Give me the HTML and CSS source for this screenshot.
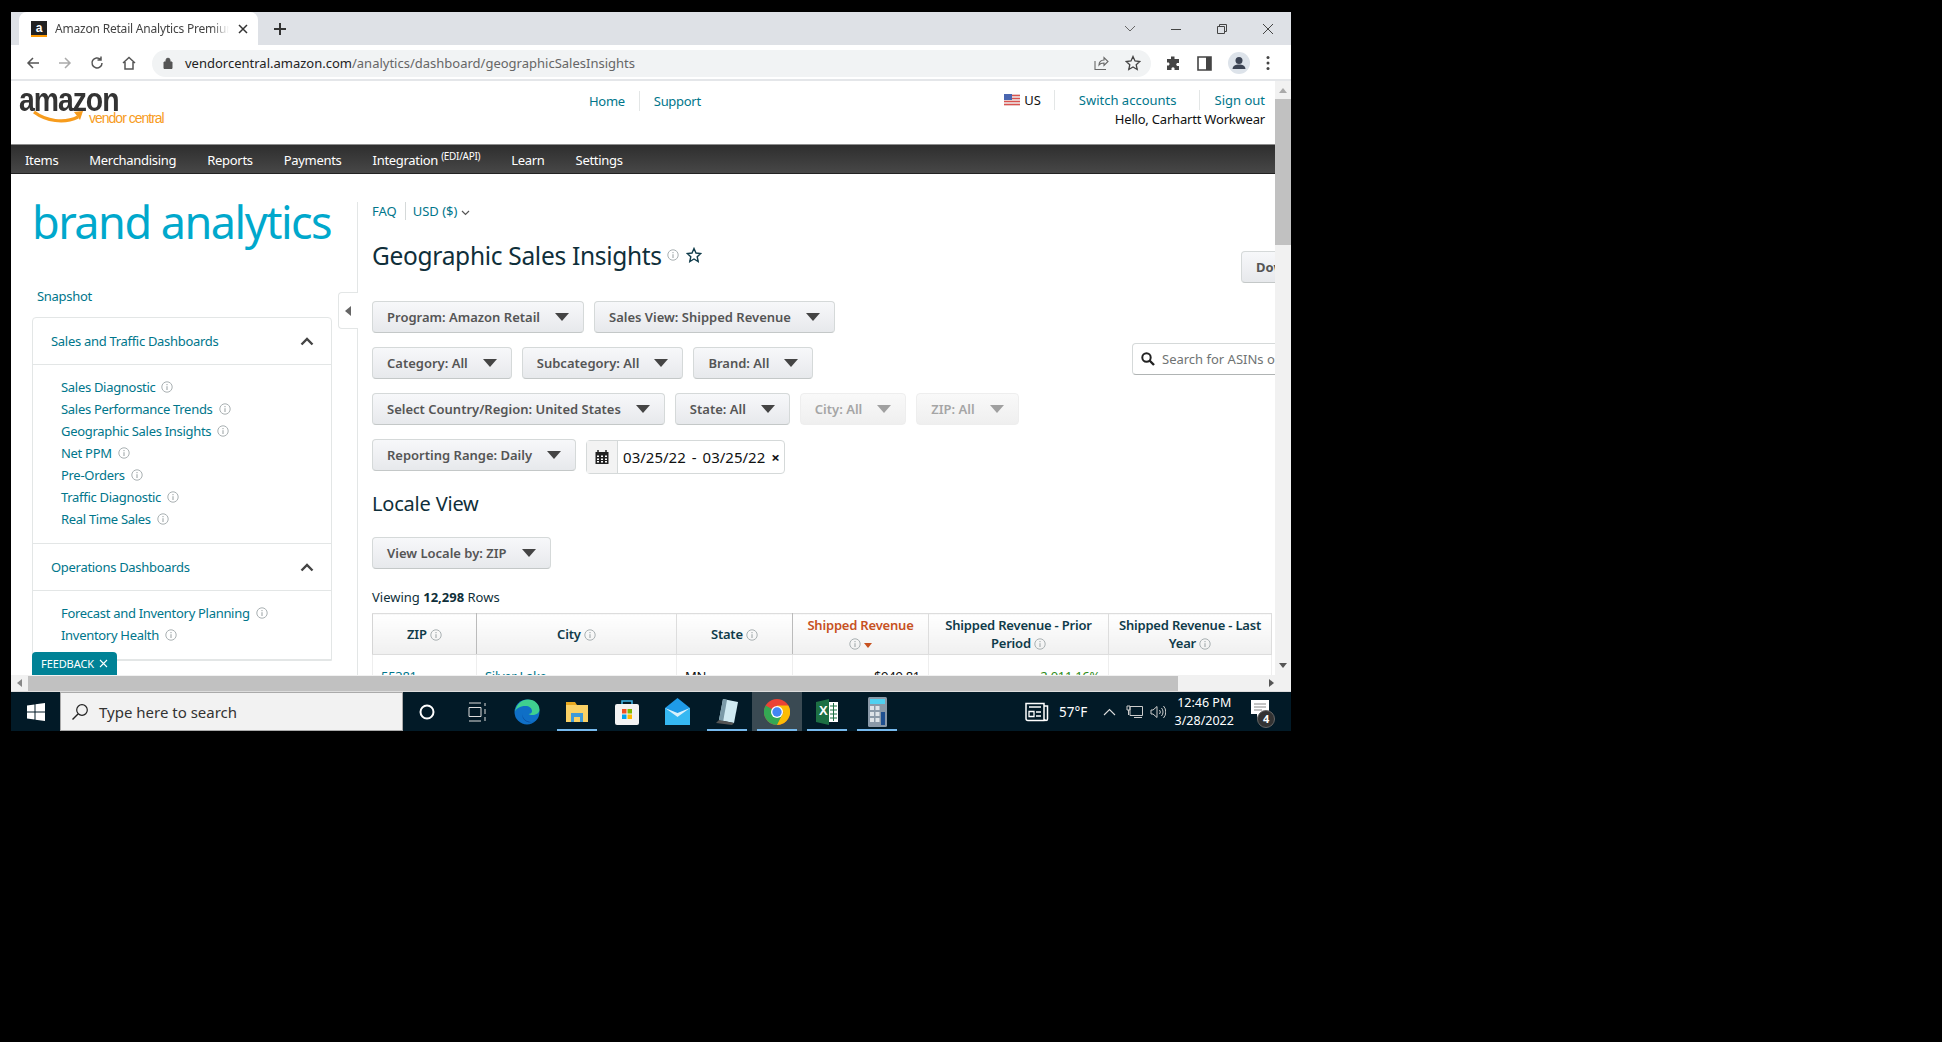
FILE: index.html
```html
<!DOCTYPE html>
<html lang="en">
<head>
    <meta charset="UTF-8">
    <meta name="viewport" content="width=device-width, initial-scale=1.0">
    <title>Geographic Sales Insights</title>
    <link rel="stylesheet" href="styles.css">
</head>
<body>

<svg class="defs" width="0" height="0">
    <symbol id="info" viewBox="0 0 12 12">
        <circle cx="6" cy="6" r="5.2" fill="none" stroke="#a9b0b2" stroke-width="1"/>
        <rect x="5.4" y="5.2" width="1.2" height="3.8" fill="#a9b0b2"/>
        <rect x="5.4" y="3" width="1.2" height="1.2" fill="#a9b0b2"/>
    </symbol>
    <symbol id="caret" viewBox="0 0 14 8">
        <path d="M0 0h14L7 8z"/>
    </symbol>
    <symbol id="chev-up" viewBox="0 0 14 9">
        <path d="M1.5 7.5L7 2l5.500 5.500" fill="none" stroke="#444" stroke-width="2.400"/>
    </symbol>
</svg>

<div class="window">
    <!-- browser chrome -->
    <div class="tabbar">
        <div class="tab">
            <span class="favicon">a</span>
            <span class="tab-title">Amazon Retail Analytics Premium</span>
            <svg class="tab-x" width="10" height="10" viewBox="0 0 10 10"><path d="M1 1l8 8M9 1l-8 8" stroke="#333" stroke-width="1.500"/></svg>
        </div>
        <svg class="new-tab" width="14" height="14" viewBox="0 0 14 14"><path d="M7 1v12M1 7h12" stroke="#333" stroke-width="2"/></svg>
        <div class="win-controls">
            <svg width="12" height="8" viewBox="0 0 12 8"><path d="M1 1l5 5 5-5" fill="none" stroke="#666" stroke-width="1"/></svg>
            <svg width="12" height="12" viewBox="0 0 12 12"><path d="M1 6.500h10" stroke="#444" stroke-width="1"/></svg>
            <svg width="12" height="12" viewBox="0 0 12 12"><path d="M1.500 3.500h7v7h-7zM3.500 3.500v-2h7v7h-2" fill="none" stroke="#444" stroke-width="1"/></svg>
            <svg width="12" height="12" viewBox="0 0 12 12"><path d="M1 1l10 10M11 1L1 11" stroke="#444" stroke-width="1"/></svg>
        </div>
    </div>
    <div class="toolbar">
        <div class="nav-btns">
            <svg width="14" height="14" viewBox="0 0 14 14"><path d="M13 7H2M7 2L2 7l5 5" fill="none" stroke="#555" stroke-width="1.500"/></svg>
            <svg width="14" height="14" viewBox="0 0 14 14"><path d="M1 7h11M7 2l5 5-5 5" fill="none" stroke="#aaa" stroke-width="1.500"/></svg>
            <svg width="14" height="14" viewBox="0 0 14 14"><path d="M12 7a5 5 0 1 1-1.500-3.600M11 0.500v3.500H7.500" fill="none" stroke="#555" stroke-width="1.500"/></svg>
            <svg width="14" height="14" viewBox="0 0 14 14"><path d="M1 7l6-5.500L13 7M3 6v7h8V6" fill="none" stroke="#555" stroke-width="1.500"/></svg>
        </div>
        <div class="omnibox">
            <svg class="lock" width="10" height="12" viewBox="0 0 10 12"><path d="M1 5h8v6.500H1zM3 5V3.200a2 2 0 0 1 4 0V5" fill="#555" stroke="#555"/></svg>
            <span class="url">vendorcentral.amazon.com<span class="url-path">/analytics/dashboard/geographicSalesInsights</span></span>
            <svg class="omni-share" width="16" height="16" viewBox="0 0 16 16"><path d="M2 6v8.500h11M6 10c0-3 2-5 5-5V2.500l4 4-4 4V8c-2 0-4 .5-5 2z" fill="none" stroke="#666" stroke-width="1.100"/></svg>
            <svg class="omni-star" width="16" height="16" viewBox="0 0 16 16"><path d="M8 1.500l2 4.500 4.800.5-3.600 3.200 1 4.800L8 12l-4.200 2.500 1-4.800L1.200 6.500 6 6z" fill="none" stroke="#444" stroke-width="1.300"/></svg>
        </div>
        <div class="tool-icons">
            <svg width="16" height="16" viewBox="0 0 16 16"><path d="M6 1.500h3.500V4H14v4h-2a2 2 0 0 0 0 3h2v4H9.500v-2a2 2 0 0 0-3 0v2H2v-4.500h1.800a2 2 0 0 0 0-3H2V4h4z" fill="#444"/></svg>
            <svg width="15" height="15" viewBox="0 0 15 15"><path d="M1 1h13v13H1z" fill="none" stroke="#444" stroke-width="1.600"/><path d="M9 1h5v13H9z" fill="#444"/></svg>
            <span class="avatar">
                <svg width="22" height="22" viewBox="0 0 22 22"><circle cx="11" cy="8.500" r="3.500" fill="#3c4454"/><path d="M4.500 17c.5-3.500 3-4.500 6.500-4.500s6 1 6.500 4.500z" fill="#3c4454"/></svg>
            </span>
            <svg width="4" height="16" viewBox="0 0 4 16"><circle cx="2" cy="2.500" r="1.500" fill="#444"/><circle cx="2" cy="8" r="1.500" fill="#444"/><circle cx="2" cy="13.500" r="1.500" fill="#444"/></svg>
        </div>
    </div>

    <!-- page -->
    <div class="viewport">
        <div class="page">
            <header class="site-header">
                <div class="logo">
                    <span class="logo-word">amazon</span>
                    <span class="logo-sub">vendor central</span>
                    <svg class="logo-smile" width="52" height="17" viewBox="0 0 52 17"><path d="M1 3c12 9 30 12 44 5" fill="none" stroke="#f79c1d" stroke-width="3.200"/><path d="M41 3l9-1-3 9z" fill="#f79c1d"/></svg>
                </div>
                <div class="top-links">
                    <a class="link">Home</a>
                    <a class="link">Support</a>
                </div>
                <div class="account">
                    <div class="account-row">
                        <span class="locale">
                            <svg width="16" height="12" viewBox="0 0 16 12"><rect width="16" height="12" fill="#eee"/><path d="M0 1.500h16M0 4.500h16M0 7.500h16M0 10.500h16" stroke="#d9534f" stroke-width="1.300"/><rect width="8" height="6" fill="#4a66b0"/></svg>
                            US
                        </span>
                        <a class="link acct-link">Switch accounts</a>
                        <a class="link acct-link">Sign out</a>
                    </div>
                    <div class="hello">Hello, Carhartt Workwear</div>
                </div>
            </header>
            <nav class="main-nav">
                <a>Items</a>
                <a>Merchandising</a>
                <a>Reports</a>
                <a>Payments</a>
                <a>Integration <sup>(EDI/API)</sup></a>
                <a>Learn</a>
                <a>Settings</a>
            </nav>

            <div class="content">
                <aside class="sidebar">
                    <div class="brand">brand analytics</div>
                    <a class="link snapshot">Snapshot</a>
                    <div class="side-box">
                        <div class="side-head"><span>Sales and Traffic Dashboards</span><svg width="14" height="9"><use href="#chev-up"/></svg></div>
                        <ul class="side-list">
                            <li>Sales Diagnostic <svg class="i"><use href="#info"/></svg></li>
                            <li>Sales Performance Trends <svg class="i"><use href="#info"/></svg></li>
                            <li>Geographic Sales Insights <svg class="i"><use href="#info"/></svg></li>
                            <li>Net PPM <svg class="i"><use href="#info"/></svg></li>
                            <li>Pre-Orders <svg class="i"><use href="#info"/></svg></li>
                            <li>Traffic Diagnostic <svg class="i"><use href="#info"/></svg></li>
                            <li>Real Time Sales <svg class="i"><use href="#info"/></svg></li>
                        </ul>
                        <div class="side-head"><span>Operations Dashboards</span><svg width="14" height="9"><use href="#chev-up"/></svg></div>
                        <ul class="side-list">
                            <li>Forecast and Inventory Planning <svg class="i"><use href="#info"/></svg></li>
                            <li>Inventory Health <svg class="i"><use href="#info"/></svg></li>
                        </ul>
                    </div>
                </aside>
                <div class="gutter">
                    <div class="collapse-tab"><svg width="6" height="10" viewBox="0 0 6 10"><path d="M6 0v10L0 5z" fill="#666"/></svg></div>
                </div>
                <main class="main">
                    <div class="sub-links">
                        <a class="link">FAQ</a>
                        <a class="link usd">USD ($) <svg width="9" height="6" viewBox="0 0 9 6"><path d="M1 1l3.500 3.500L8 1" fill="none" stroke="#555" stroke-width="1.200"/></svg></a>
                    </div>
                    <div class="title-row">
                        <h1>Geographic Sales Insights</h1>
                        <svg class="i title-i"><use href="#info"/></svg>
                        <svg class="title-star" width="16" height="16" viewBox="0 0 16 16"><path d="M8 1.500l2 4.500 4.800.5-3.600 3.200 1 4.800L8 12l-4.200 2.500 1-4.800L1.200 6.500 6 6z" fill="none" stroke="#0f3b4a" stroke-width="1.400"/></svg>
                        <button class="btn download">Download</button>
                    </div>
                    <div class="filters">
                        <div class="filter-row">
                            <button class="btn">Program: Amazon Retail <svg class="caret"><use href="#caret"/></svg></button>
                            <button class="btn">Sales View: Shipped Revenue <svg class="caret"><use href="#caret"/></svg></button>
                        </div>
                        <div class="filter-row">
                            <button class="btn">Category: All <svg class="caret"><use href="#caret"/></svg></button>
                            <button class="btn">Subcategory: All <svg class="caret"><use href="#caret"/></svg></button>
                            <button class="btn">Brand: All <svg class="caret"><use href="#caret"/></svg></button>
                            <div class="search">
                                <svg width="14" height="14" viewBox="0 0 14 14"><circle cx="5.500" cy="5.500" r="4.200" fill="none" stroke="#222" stroke-width="2"/><path d="M8.500 8.500l4.500 4.500" stroke="#222" stroke-width="2.400"/></svg>
                                <span>Search for ASINs or Keywords</span>
                            </div>
                        </div>
                        <div class="filter-row">
                            <button class="btn">Select Country/Region: United States <svg class="caret"><use href="#caret"/></svg></button>
                            <button class="btn">State: All <svg class="caret"><use href="#caret"/></svg></button>
                            <button class="btn disabled">City: All <svg class="caret"><use href="#caret"/></svg></button>
                            <button class="btn disabled">ZIP: All <svg class="caret"><use href="#caret"/></svg></button>
                        </div>
                        <div class="filter-row">
                            <button class="btn">Reporting Range: Daily <svg class="caret"><use href="#caret"/></svg></button>
                            <div class="date-range">
                                <span class="cal">
                                    <svg width="14" height="14" viewBox="0 0 14 14"><path d="M0.500 2h13v12H.5z" fill="#222"/><path d="M3 0v3M11 0v3" stroke="#222" stroke-width="1.500"/><path d="M2 5.500h2v1.500H2zM6 5.500h2v1.500H6zM10 5.500h2v1.500h-2zM2 8.500h2V10H2zM6 8.500h2V10H6zM10 8.500h2V10h-2zM2 11h2v1.500H2zM6 11h2v1.500H6zM10 11h2v1.500h-2z" fill="#fff"/></svg>
                                </span>
                                <span class="date">03/25/22</span>
                                <span class="dash">-</span>
                                <span class="date">03/25/22</span>
                                <span class="clear">×</span>
                            </div>
                        </div>
                    </div>
                    <h2>Locale View</h2>
                    <button class="btn locale-btn">View Locale by: ZIP <svg class="caret"><use href="#caret"/></svg></button>
                    <p class="viewing">Viewing <b>12,298</b> Rows</p>
                    <table class="grid">
                        <colgroup>
                            <col class="c-zip"><col class="c-city"><col class="c-state"><col class="c-rev"><col class="c-prior"><col class="c-last">
                        </colgroup>
                        <thead>
                            <tr>
                                <th class="fixed-edge">ZIP <svg class="i"><use href="#info"/></svg></th>
                                <th>City <svg class="i"><use href="#info"/></svg></th>
                                <th class="fixed-edge">State <svg class="i"><use href="#info"/></svg></th>
                                <th class="sorted">Shipped Revenue<br><svg class="i"><use href="#info"/></svg> <svg class="sort-caret" width="8" height="5" viewBox="0 0 8 5"><path d="M0 0h8L4 5z" fill="#c7511f"/></svg></th>
                                <th>Shipped Revenue - Prior Period <svg class="i"><use href="#info"/></svg></th>
                                <th>Shipped Revenue - Last Year <svg class="i"><use href="#info"/></svg></th>
                            </tr>
                        </thead>
                        <tbody>
                            <tr>
                                <td><a class="link">55381</a></td>
                                <td><a class="link">Silver Lake</a></td>
                                <td>MN</td>
                                <td class="num">$949.81</td>
                                <td class="num up">2,011.16%</td>
                                <td class="num"></td>
                            </tr>
                        </tbody>
                    </table>
                </main>
            </div>
            <div class="feedback">FEEDBACK <svg width="9" height="9" viewBox="0 0 9 9"><path d="M1 1l7 7M8 1L1 8" stroke="#fff" stroke-width="1.100"/></svg></div>
        </div>
        <div class="v-scroll">
            <svg width="8" height="5" viewBox="0 0 8 5"><path d="M0 5h8L4 0z" fill="#aaa"/></svg>
            <div class="v-thumb"></div>
            <svg class="v-down" width="8" height="5" viewBox="0 0 8 5"><path d="M0 0h8L4 5z" fill="#555"/></svg>
        </div>
    </div>
    <div class="h-scroll">
        <svg width="5" height="8" viewBox="0 0 5 8"><path d="M5 0v8L0 4z" fill="#888"/></svg>
        <div class="h-thumb"></div>
        <svg class="h-right" width="5" height="8" viewBox="0 0 5 8"><path d="M0 0v8l5-4z" fill="#555"/></svg>
    </div>

    <!-- windows taskbar -->
    <div class="taskbar">
        <div class="start">
            <svg width="18" height="18" viewBox="0 0 18 18"><path d="M0 2.500l7.500-1v7H0zM8.500 1.300L18 0v8.500H8.500zM0 9.500h7.500v7l-7.500-1zM8.500 9.500H18V18l-9.500-1.300z" fill="#fff"/></svg>
        </div>
        <div class="task-search">
            <svg width="18" height="18" viewBox="0 0 18 18"><circle cx="11" cy="7" r="5.300" fill="none" stroke="#222" stroke-width="1.200"/><path d="M7 11l-5.500 5.500" stroke="#222" stroke-width="1.400"/></svg>
            <span>Type here to search</span>
        </div>
        <div class="task-icons">
            <span class="task-item"><svg width="16" height="16" viewBox="0 0 16 16"><circle cx="8" cy="8" r="6.500" fill="none" stroke="#fff" stroke-width="2"/></svg></span>
            <span class="task-item"><svg width="18" height="20" viewBox="0 0 18 20"><path d="M1 1h12M1 19h12M1 5.500h12v9H1zM17 1v3M17 7v5M17 15v4" fill="none" stroke="#ddd" stroke-width="1"/></svg></span>
            <span class="task-item">
                <svg width="26" height="26" viewBox="0 0 26 26"><circle cx="13" cy="13" r="12.500" fill="#0f6fc6"/><path d="M1 13C2 5 8 .5 14 .5c7 0 11.500 5 11.500 10 0 4-4 5.500-7 5.500-2 0-3.500-.5-4-1 2 0 3.500-1 3.500-3 0-3-3-5-6.500-5C6 7 2 9.500 1 13z" fill="#3fd08f"/><path d="M8 14c0 5 4 9 9 9 1.500 0 3-.5 4-1-5 3-13 1-13-8z" fill="#0a3f8f"/></svg>
            </span>
            <span class="task-item open">
                <svg width="24" height="22" viewBox="0 0 24 22"><path d="M1 1h9l2 3H1z" fill="#e8a820"/><path d="M1 4h22v17H1z" fill="#fad165"/><path d="M6 12h12v9H6z" fill="#3f9ad8"/><path d="M9 16h6v5H9z" fill="#fad165"/></svg>
            </span>
            <span class="task-item">
                <svg width="24" height="26" viewBox="0 0 24 26"><path d="M7 7V2h10v5" fill="none" stroke="#3fb5e8" stroke-width="1.500"/><rect y="5" width="24" height="21" rx="2" fill="#f3f3f3"/><rect x="7" y="10" width="4.500" height="4.500" fill="#f25022"/><rect x="12.500" y="10" width="4.500" height="4.500" fill="#7fba00"/><rect x="7" y="15.500" width="4.500" height="4.500" fill="#00a4ef"/><rect x="12.500" y="15.500" width="4.500" height="4.500" fill="#ffb900"/></svg>
            </span>
            <span class="task-item">
                <svg width="25" height="27" viewBox="0 0 25 27"><path d="M0 10L12.500 0 25 10v17H0z" fill="#1f9be8"/><path d="M0 10l12.500 9L25 10v17H0z" fill="#35b8f2"/><path d="M0 10l12.500 9L25 10l-12.500 5z" fill="#d9f2fc"/></svg>
            </span>
            <span class="task-item open">
                <svg width="24" height="28" viewBox="0 0 24 28"><path d="M8 1l15 3-4 21-15-3z" fill="#cfeaf2"/><path d="M4 22l4-21 4 1-4 22z" fill="#7a9aa8"/><path d="M1 25l3-3 15 3-2 2z" fill="#555"/></svg>
            </span>
            <span class="task-item open active">
                <svg width="26" height="26" viewBox="0 0 26 26"><circle cx="13" cy="13" r="13" fill="#ea4335"/><path d="M13 13L1.700 6.500A13 13 0 0 0 13 26l6.500-11.300z" fill="#34a853"/><path d="M13 13l6.500 0L13 26a13 13 0 0 0 11.300-19.500H13z" fill="#fbbc05"/><circle cx="13" cy="13" r="6" fill="#fff"/><circle cx="13" cy="13" r="4.700" fill="#4285f4"/></svg>
            </span>
            <span class="task-item open">
                <svg width="22" height="26" viewBox="0 0 22 26"><path d="M0 3l13-3v26L0 23z" fill="#1d7044"/><path d="M13 3h9v20h-9z" fill="#fff"/><path d="M14 7h7M14 11h7M14 15h7M14 19h7M17.500 4v18" stroke="#1d7044" stroke-width="1"/></svg>
                <span class="xl">X</span>
            </span>
            <span class="task-item open">
                <svg width="19" height="30" viewBox="0 0 19 30"><rect width="19" height="30" rx="1.500" fill="#8a99a8"/><rect x="2" y="2" width="15" height="5" fill="#4fd0f0"/><path d="M2 9h4v4H2zM7.500 9h4v4h-4zM2 15h4v4H2zM7.500 15h4v4h-4zM2 21h4v4H2zM7.500 21h4v4h-4z" fill="#dde3e8"/><rect x="13" y="15" width="4" height="13" fill="#1f4f8f"/></svg>
            </span>
        </div>
        <div class="tray">
            <svg class="tray-news" width="24" height="20" viewBox="0 0 24 20"><path d="M1 1.500h18v17H3a2 2 0 0 1-2-2zM19 4h3.500v13a1.500 1.500 0 0 1-3 0" fill="none" stroke="#fff" stroke-width="1.500"/><path d="M4 5h12M4 9.500h5v5H4zM11 10h5M11 14h5" fill="none" stroke="#fff" stroke-width="1.300"/></svg>
            <span class="temp">57°F</span>
            <svg class="tray-up" width="13" height="8" viewBox="0 0 13 8"><path d="M1 7l5.500-5.500L12 7" fill="none" stroke="#ddd" stroke-width="1.100"/></svg>
            <svg class="tray-net" width="17" height="14" viewBox="0 0 17 14"><path d="M4 1.500h12.500v9H4zM8 12.500h8M1 1h3v4H1zM2.500 5v5" fill="none" stroke="#ccc" stroke-width="1"/></svg>
            <svg class="tray-vol" width="16" height="14" viewBox="0 0 16 14"><path d="M1 5v4h2l4 3.500v-11L3 5zM9.500 5a3 3 0 0 1 0 4M11.500 3a6 6 0 0 1 0 8M13.500 1a9 9 0 0 1 0 12" fill="none" stroke="#ccc" stroke-width="1"/></svg>
            <div class="clock"><span>12:46 PM</span><span>3/28/2022</span></div>
            <div class="notify">
                <svg width="20" height="20" viewBox="0 0 20 20"><path d="M1 1h18v14h-8l-4 4v-4H1z" fill="#fff"/><path d="M4 5h12M4 8h12M4 11h8" stroke="#888" stroke-width="1"/></svg>
                <span class="badge">4</span>
            </div>
        </div>
    </div>
</div>

</body>
</html>
```

FILE: styles.css
```css
* {
    box-sizing: border-box;
}

body {
    margin: 0;
    background-color: #000;
    font-family: 'Noto Sans', sans-serif;
    font-size: 13px;
    letter-spacing: -0.3px;
    color: #0f1111;
    height: 1042px;
    overflow: hidden;
}

.defs {
    position: absolute;
}

.link {
    color: #00768b;
}

.window {
    width: 1280px;
    height: 719px;
    margin: 12px 0 0 11px;
    display: flex;
    flex-direction: column;
    background-color: #fff;
    overflow: hidden;
}

/* browser chrome */
.tabbar {
    height: 33px;
    background-color: #dee1e6;
    display: flex;
    align-items: flex-end;
    padding-left: 8px;
    flex: none;
}

.tab {
    width: 239px;
    height: 33px;
    background-color: #fff;
    border-radius: 8px 8px 0 0;
    display: flex;
    align-items: center;
    padding: 0 12px;
}

.favicon {
    width: 16px;
    height: 16px;
    background-color: #222;
    color: #fff;
    font: bold 12px/14px 'Liberation Sans', sans-serif;
    text-align: center;
    flex: none;
    border-bottom: 2px solid #f90;
}

.tab-title {
    font-size: 12px;
    color: #444;
    margin-left: 8px;
    width: 174px;
    white-space: nowrap;
    overflow: hidden;
    flex: none;
    letter-spacing: -0.2px;
    -webkit-mask-image: linear-gradient(to right, #000 90%, transparent);
    mask-image: linear-gradient(to right, #000 90%, transparent);
}

.tab-x {
    margin-left: 9px;
    flex: none;
}

.new-tab {
    margin: 0 0 9px 15px;
}

.win-controls {
    margin-left: auto;
    display: flex;
    align-items: center;
    gap: 34px;
    height: 33px;
    padding-right: 17px;
}

.toolbar {
    height: 36px;
    display: flex;
    align-items: center;
    border-bottom: 2px solid #e4e6e9;
    flex: none;
    padding: 2px 0 0 15px;
    letter-spacing: 0;
}

.nav-btns {
    display: flex;
    gap: 18px;
    width: 126px;
    flex: none;
}

.omnibox {
    width: 999px;
    height: 27px;
    border-radius: 14px;
    background-color: #f1f3f4;
    display: flex;
    align-items: center;
    padding-left: 11px;
    flex: none;
}

.url {
    margin-left: 12px;
    font-size: 13px;
    color: #222;
}

.url-path {
    color: #666;
}

.omni-share {
    margin-left: auto;
}

.omni-star {
    margin: 0 10px 0 16px;
}

.tool-icons {
    display: flex;
    align-items: center;
    gap: 16px;
    margin-left: 14px;
}

.avatar {
    width: 22px;
    height: 22px;
    border-radius: 50%;
    background-color: #dde3ea;
    display: block;
}

.avatar svg {
    display: block;
}

/* page */
.viewport {
    height: 594px;
    display: flex;
    flex: none;
}

.page {
    width: 1264px;
    height: 594px;
    position: relative;
    overflow: hidden;
    flex: none;
}

.site-header {
    height: 63px;
    position: relative;
    display: flex;
}

.logo {
    position: relative;
    width: 200px;
    flex: none;
}

.logo-word {
    position: absolute;
    left: 8px;
    top: 0;
    font: bold 33px/38px 'Liberation Sans', sans-serif;
    letter-spacing: -1.200px;
    color: #333;
    transform: scaleX(0.86);
    transform-origin: left;
}

.logo-sub {
    position: absolute;
    left: 78px;
    top: 27px;
    font: 14px/20px 'Liberation Sans', sans-serif;
    letter-spacing: -1px;
    color: #f79c1d;
}

.logo-smile {
    position: absolute;
    left: 22px;
    top: 28px;
}

.top-links {
    display: flex;
    align-items: center;
    height: 20px;
    margin: 10px 0 0 378px;
    flex: none;
}

.top-links a:first-child {
    padding-right: 14px;
    border-right: 1px solid #e3e6e6;
    line-height: 20px;
}

.top-links a:last-child {
    padding-left: 14px;
}

.account {
    position: absolute;
    right: 10px;
    top: 9px;
    text-align: right;
    letter-spacing: 0;
}

.account-row {
    display: flex;
    align-items: center;
    justify-content: flex-end;
    height: 20px;
}

.locale {
    display: flex;
    align-items: center;
    gap: 4px;
    padding-right: 13px;
}

.acct-link {
    padding-left: 24px;
    padding-right: 22px;
    border-left: 1px solid #e3e6e6;
    line-height: 20px;
}

.acct-link:last-child {
    padding-left: 15px;
    padding-right: 0;
}

.hello {
    line-height: 18px;
    letter-spacing: -0.2px;
}

.main-nav {
    height: 30px;
    display: flex;
    align-items: center;
    padding: 1px 0 0 14px;
    background: linear-gradient(#2e2e2e, #474747);
    border-top: 1px solid #8d8d8d;
    border-bottom: 1px solid #222;
}

.main-nav a {
    color: #fff;
    padding: 0 15px 0 0;
    margin-right: 16px;
    white-space: nowrap;
}

.main-nav sup {
    font-size: 10px;
    line-height: 0;
}

.content {
    display: flex;
    height: 501px;
}

.sidebar {
    width: 322px;
    padding: 18px 0 0 21px;
    flex: none;
}

.brand {
    font-size: 45px;
    line-height: 60px;
    color: #00a8cc;
    letter-spacing: -1.500px;
    white-space: nowrap;
}

.snapshot {
    display: block;
    margin: 34px 0 0 5px;
    line-height: 20px;
}

.side-box {
    width: 300px;
    margin-top: 11px;
    border: 1px solid #e3e6e6;
    border-radius: 4px 4px 0 0;
}

.side-head {
    height: 47px;
    display: flex;
    align-items: center;
    justify-content: space-between;
    padding: 0 17px 0 18px;
    color: #00768b;
    border-bottom: 1px solid #e3e6e6;
}

.side-list {
    list-style: none;
    margin: 0;
    padding: 11px 0 13px 28px;
    color: #00768b;
    border-bottom: 1px solid #e3e6e6;
}

.side-list li {
    height: 22px;
    line-height: 22px;
    display: flex;
    align-items: center;
    gap: 6px;
}

.i {
    width: 12px;
    height: 12px;
    flex: none;
}

.gutter {
    width: 30px;
    flex: none;
    border-right: 1px solid #e3e6e6;
    margin-top: 28px;
    margin-left: -5px;
}

.collapse-tab {
    width: 20px;
    height: 37px;
    margin: 90px 0 0 10px;
    background-color: #fff;
    border: 1px solid #e3e6e6;
    border-right: none;
    border-radius: 4px 0 0 4px;
    display: flex;
    align-items: center;
    padding-left: 6px;
}

.main {
    width: 960px;
    padding-left: 14px;
    flex: none;
}

.sub-links {
    display: flex;
    align-items: center;
    margin-top: 28px;
    height: 18px;
    letter-spacing: 0;
}

.sub-links a:first-child {
    padding-right: 8px;
    border-right: 1px solid #d5d9d9;
    line-height: 18px;
}

.usd {
    padding-left: 7px;
}

.title-row {
    display: flex;
    align-items: center;
    height: 32px;
    margin-top: 19px;
}

h1 {
    font-size: 24.500px;
    font-weight: 400;
    margin: 0;
    color: #0f2f3a;
    white-space: nowrap;
}

.title-i {
    margin-left: 5px;
}

.title-star {
    margin-left: 7px;
}

.btn {
    height: 32px;
    padding: 0 14px;
    display: inline-flex;
    align-items: center;
    gap: 15px;
    font-family: inherit;
    font-size: 13px;
    font-weight: 600;
    letter-spacing: 0;
    color: #555;
    background: linear-gradient(#f7f8fa, #e7e9ec);
    border: 1px solid #d5d9d9;
    border-bottom-color: #c4c8c8;
    border-radius: 4px;
    white-space: nowrap;
}

.download {
    margin-left: auto;
    margin-top: 23px;
    width: 77px;
    justify-content: flex-start;
    font-weight: 700;
}

.caret {
    width: 14px;
    height: 8px;
    fill: #444;
    flex: none;
}

.btn.disabled {
    color: #a5a5a5;
    background: linear-gradient(#f9f9f9, #efefef);
    border-color: #eee;
}

.btn.disabled .caret {
    fill: #a0a0a0;
}

.filters {
    display: flex;
    flex-direction: column;
    gap: 14px;
    margin-top: 30px;
}

.filter-row {
    display: flex;
    align-items: flex-start;
    gap: 10px;
    height: 32px;
}

.search {
    width: 186px;
    height: 32px;
    margin: -4px 0 0 auto;
    border: 1px solid #d5d9d9;
    border-bottom-color: #b0b4b4;
    border-radius: 4px;
    display: flex;
    align-items: center;
    gap: 7px;
    padding-left: 8px;
    color: #6f7373;
    letter-spacing: 0;
    white-space: nowrap;
    overflow: hidden;
}

.search svg {
    flex: none;
}

.date-range {
    height: 34px;
    margin-top: 1px;
    display: flex;
    align-items: center;
    border: 1px solid #d5d9d9;
    border-radius: 4px;
    font-size: 15px;
    letter-spacing: 0;
}

.cal {
    width: 31px;
    height: 32px;
    background-color: #f3f3f3;
    border-right: 1px solid #d5d9d9;
    display: flex;
    align-items: center;
    justify-content: center;
}

.date {
    margin-left: 5px;
}

.dash {
    margin-left: 6px;
    margin-right: 1px;
}

.clear {
    margin: 0 4px 0 6px;
    font-weight: 700;
}

h2 {
    font-size: 20px;
    font-weight: 400;
    line-height: 28px;
    margin: 19px 0 0;
    color: #0f2f3a;
    letter-spacing: -0.2px;
}

.locale-btn {
    margin-top: 19px;
}

.viewing {
    margin: 18px 0 0;
    line-height: 20px;
    color: #0f2f3a;
    letter-spacing: 0;
}

.grid {
    width: 899px;
    margin-top: 6px;
    border-collapse: collapse;
    table-layout: fixed;
}

.c-zip { width: 104px; }
.c-city { width: 200px; }
.c-state { width: 116px; }
.c-rev { width: 136px; }
.c-prior { width: 180px; }
.c-last { width: 163px; }

.grid th {
    height: 41px;
    padding: 0 6px;
    font-size: 13px;
    font-weight: 600;
    letter-spacing: -0.2px;
    line-height: 18px;
    color: #0f3b4a;
    background: linear-gradient(#fff, #f0f0f0);
    border: 1px solid #ddd;
    border-left-color: #d5d5d5;
    text-align: center;
}

.grid th .i {
    vertical-align: -2px;
}

.grid th.fixed-edge {
    border-right-color: #bbb;
}

.grid th.sorted {
    color: #c7511f;
}

.grid td {
    height: 40px;
    padding: 2px 8px 0;
    border: 1px solid #eee;
    vertical-align: middle;
}

.grid td.num {
    text-align: right;
}

.grid td.up {
    color: #2e8b17;
}

.feedback {
    position: absolute;
    left: 21px;
    bottom: 0;
    width: 85px;
    height: 23px;
    background-color: #008296;
    color: #fff;
    font-size: 11px;
    letter-spacing: -0.1px;
    border-radius: 4px 4px 0 0;
    display: flex;
    align-items: center;
    justify-content: center;
    gap: 5px;
}

.v-scroll {
    width: 16px;
    background-color: #f1f1f1;
    display: flex;
    flex-direction: column;
    align-items: center;
    padding-top: 7px;
    flex: none;
}

.v-thumb {
    width: 100%;
    height: 146px;
    margin-top: 6px;
    background-color: #c1c1c1;
}

.v-down {
    margin-top: auto;
    margin-bottom: 7px;
}

.h-scroll {
    height: 17px;
    background-color: #f1f1f1;
    display: flex;
    align-items: center;
    padding: 0 6px;
    border-bottom: 1px solid #ddd;
    flex: none;
}

.h-thumb {
    width: 1150px;
    height: 15px;
    margin-left: 6px;
    background-color: #c1c1c1;
}

.h-right {
    margin-left: auto;
    margin-right: 11px;
}

/* windows taskbar */
.taskbar {
    height: 39px;
    background-color: #021a27;
    display: flex;
    flex: none;
    color: #fff;
    letter-spacing: 0;
}

.start {
    width: 49px;
    display: flex;
    align-items: center;
    justify-content: center;
    flex: none;
}

.task-search {
    width: 343px;
    background-color: #f2f2f2;
    border: 1px solid #aaa;
    display: flex;
    align-items: center;
    gap: 10px;
    padding-left: 10px;
    color: #333;
    font-size: 15px;
    flex: none;
}

.task-icons {
    display: flex;
    margin-left: -1px;
    flex: none;
}

.task-item {
    width: 50px;
    height: 39px;
    position: relative;
    display: flex;
    align-items: center;
    justify-content: center;
    flex: none;
}

.task-item.open::after {
    content: '';
    position: absolute;
    left: 5px;
    right: 5px;
    bottom: 0;
    height: 2px;
    background-color: #76b9ed;
}

.task-item.active {
    background-color: #3a4a53;
}

.xl {
    position: absolute;
    left: 17px;
    top: 10px;
    font: bold 13px/18px 'Liberation Sans', sans-serif;
    color: #fff;
}

.tray {
    display: flex;
    align-items: center;
    margin-left: 123px;
    flex: none;
}

.temp {
    font-size: 13.500px;
    margin-left: 10px;
}

.tray-up {
    margin-left: 16px;
}

.tray-net {
    margin-left: 10px;
}

.tray-vol {
    margin-left: 7px;
}

.clock {
    display: flex;
    flex-direction: column;
    align-items: center;
    font-size: 12.500px;
    line-height: 18px;
    margin-left: 8px;
    width: 60px;
}

.notify {
    position: relative;
    margin-left: 16px;
    height: 30px;
    padding-top: 2px;
}

.badge {
    position: absolute;
    left: 7px;
    top: 13px;
    width: 18px;
    height: 18px;
    border-radius: 50%;
    background-color: #333;
    border: 1px solid #666;
    font-size: 11px;
    font-weight: 700;
    line-height: 16px;
    text-align: center;
}
```
